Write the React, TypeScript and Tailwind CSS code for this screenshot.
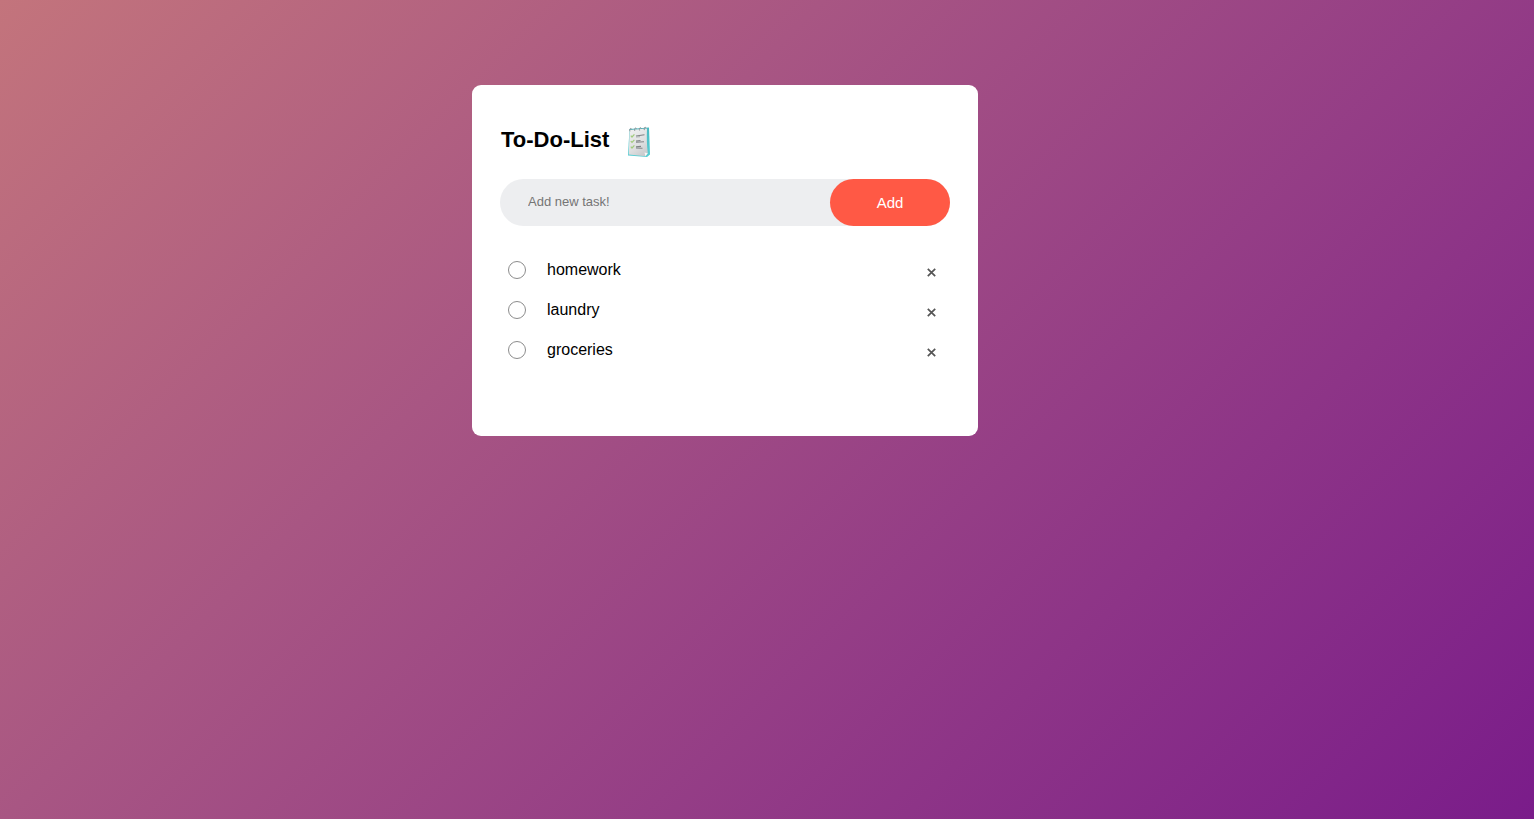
import { FormEvent, useState } from "react";

type Task = { id: number; text: string; done: boolean };

const initialTasks: Task[] = [
  { id: 1, text: "homework", done: false },
  { id: 2, text: "laundry", done: false },
  { id: 3, text: "groceries", done: false },
];

function NotepadIcon() {
  return (
    <svg className="h-8 w-7" viewBox="0 0 28 32" fill="none" aria-hidden="true">
      <defs>
        <linearGradient id="paper" x1="3" y1="4" x2="23" y2="30" gradientUnits="userSpaceOnUse">
          <stop stopColor="#f1f1f1" />
          <stop offset="0.6" stopColor="#dedfe0" />
          <stop offset="1" stopColor="#c3c6c8" />
        </linearGradient>
        <linearGradient id="cover" x1="22" y1="2" x2="22" y2="31" gradientUnits="userSpaceOnUse">
          <stop stopColor="#49b9c1" />
          <stop offset="1" stopColor="#58cdd3" />
        </linearGradient>
      </defs>
      <path d="M4.5 4 24 2.5 25 29.5 22 32 3 30.5Z" fill="url(#cover)" />
      <path d="M4.6 5 22 3.5C21.6 12 21.8 20 22.8 28.2L20.4 31.2 3.8 29.6Z" fill="url(#paper)" />
      <path d="M22.8 28.2 19.5 27.5 20.4 31.2Z" fill="#f8f8f8" />
      <path
        d="M5 6.3C4 4 6 2.3 6.8 4.5M9.8 5.9C8.8 3.6 10.8 1.9 11.6 4.1M14.6 5.5C13.6 3.2 15.6 1.5 16.4 3.7M19.4 5.1C18.4 2.8 20.4 1.1 21.2 3.3"
        stroke="#899094"
        strokeWidth="1"
      />
      <path
        d="M5.8 10.7 7 12 9.4 9.4M5.8 16.1 7 17.4 9.4 14.8M5.8 21.7 7 23 9.4 20.4"
        stroke="#a2cb7d"
        strokeWidth="1.2"
      />
      <path
        d="M11 11 19.5 9.8M11 16 15.5 15.5M11 17.2 19 16.8M11 21.8 16 21.4M11 23 17.5 23.2"
        stroke="#808386"
        strokeWidth="1.1"
      />
      <path d="M11 12 15 11.7" stroke="#aaadae" />
    </svg>
  );
}

export default function App() {
  const [tasks, setTasks] = useState(initialTasks);
  const [draft, setDraft] = useState("");

  const addTask = (event: FormEvent) => {
    event.preventDefault();
    const text = draft.trim();
    if (!text) return;
    setTasks([...tasks, { id: Date.now(), text, done: false }]);
    setDraft("");
  };

  const toggleTask = (id: number) =>
    setTasks(tasks.map((task) => (task.id === id ? { ...task, done: !task.done } : task)));

  return (
    <main className="min-h-screen bg-[linear-gradient(135deg,#c3747c,#a85683_35%,#7a1c8a)] px-4 pt-[85px] pb-5 font-['Liberation_Sans',Arial,sans-serif] text-black lg:pr-[100px]">
      <section className="mx-auto w-full max-w-[506px] rounded-[9px] bg-white px-7 pt-10 pb-[66px]">
        <h1 className="mb-[22px] flex items-center gap-4 pl-px text-[22px] leading-[34px] font-bold">
          <span className="-mt-0.5">To-Do-List</span>
          <NotepadIcon />
        </h1>
        <form onSubmit={addTask} className="flex items-stretch rounded-full bg-[#edeef0]">
          <input
            type="text"
            aria-label="New task"
            placeholder="Add new task!"
            value={draft}
            onChange={(event) => setDraft(event.target.value)}
            className="min-w-0 flex-1 bg-transparent pr-2 pb-0.5 pl-7 text-[13px] outline-none placeholder:text-[#757575]"
          />
          <button
            type="submit"
            className="w-[120px] cursor-pointer rounded-full bg-[#ff5945] py-3 text-[15px] leading-[23px] text-white"
          >
            Add
          </button>
        </form>
        <ul className="mt-6">
          {tasks.map((task) => (
            <li key={task.id} className="flex h-10 items-center px-2">
              <input
                id={`task-${task.id}`}
                type="checkbox"
                checked={task.done}
                onChange={() => toggleTask(task.id)}
                className="size-[18px] shrink-0 cursor-pointer appearance-none rounded-full border border-[#8c8c8c] checked:border-[#ff5945] checked:bg-[#ff5945]"
              />
              <label
                htmlFor={`task-${task.id}`}
                className={
                  task.done
                    ? "flex-1 cursor-pointer pl-[21px] text-base text-[#555] line-through"
                    : "flex-1 cursor-pointer pl-[21px] text-base"
                }
              >
                {task.text}
              </label>
              <button
                type="button"
                aria-label={`Delete ${task.text}`}
                onClick={() => setTasks(tasks.filter((other) => other.id !== task.id))}
                className="mt-1 flex size-[22px] cursor-pointer items-center justify-center text-[#555]"
              >
                <svg className="size-[9px]" viewBox="0 0 9 9" aria-hidden="true">
                  <path d="M.8.8 8.2 8.2M8.2.8.8 8.2" stroke="currentColor" strokeWidth="1.7" />
                </svg>
              </button>
            </li>
          ))}
        </ul>
      </section>
    </main>
  );
}
